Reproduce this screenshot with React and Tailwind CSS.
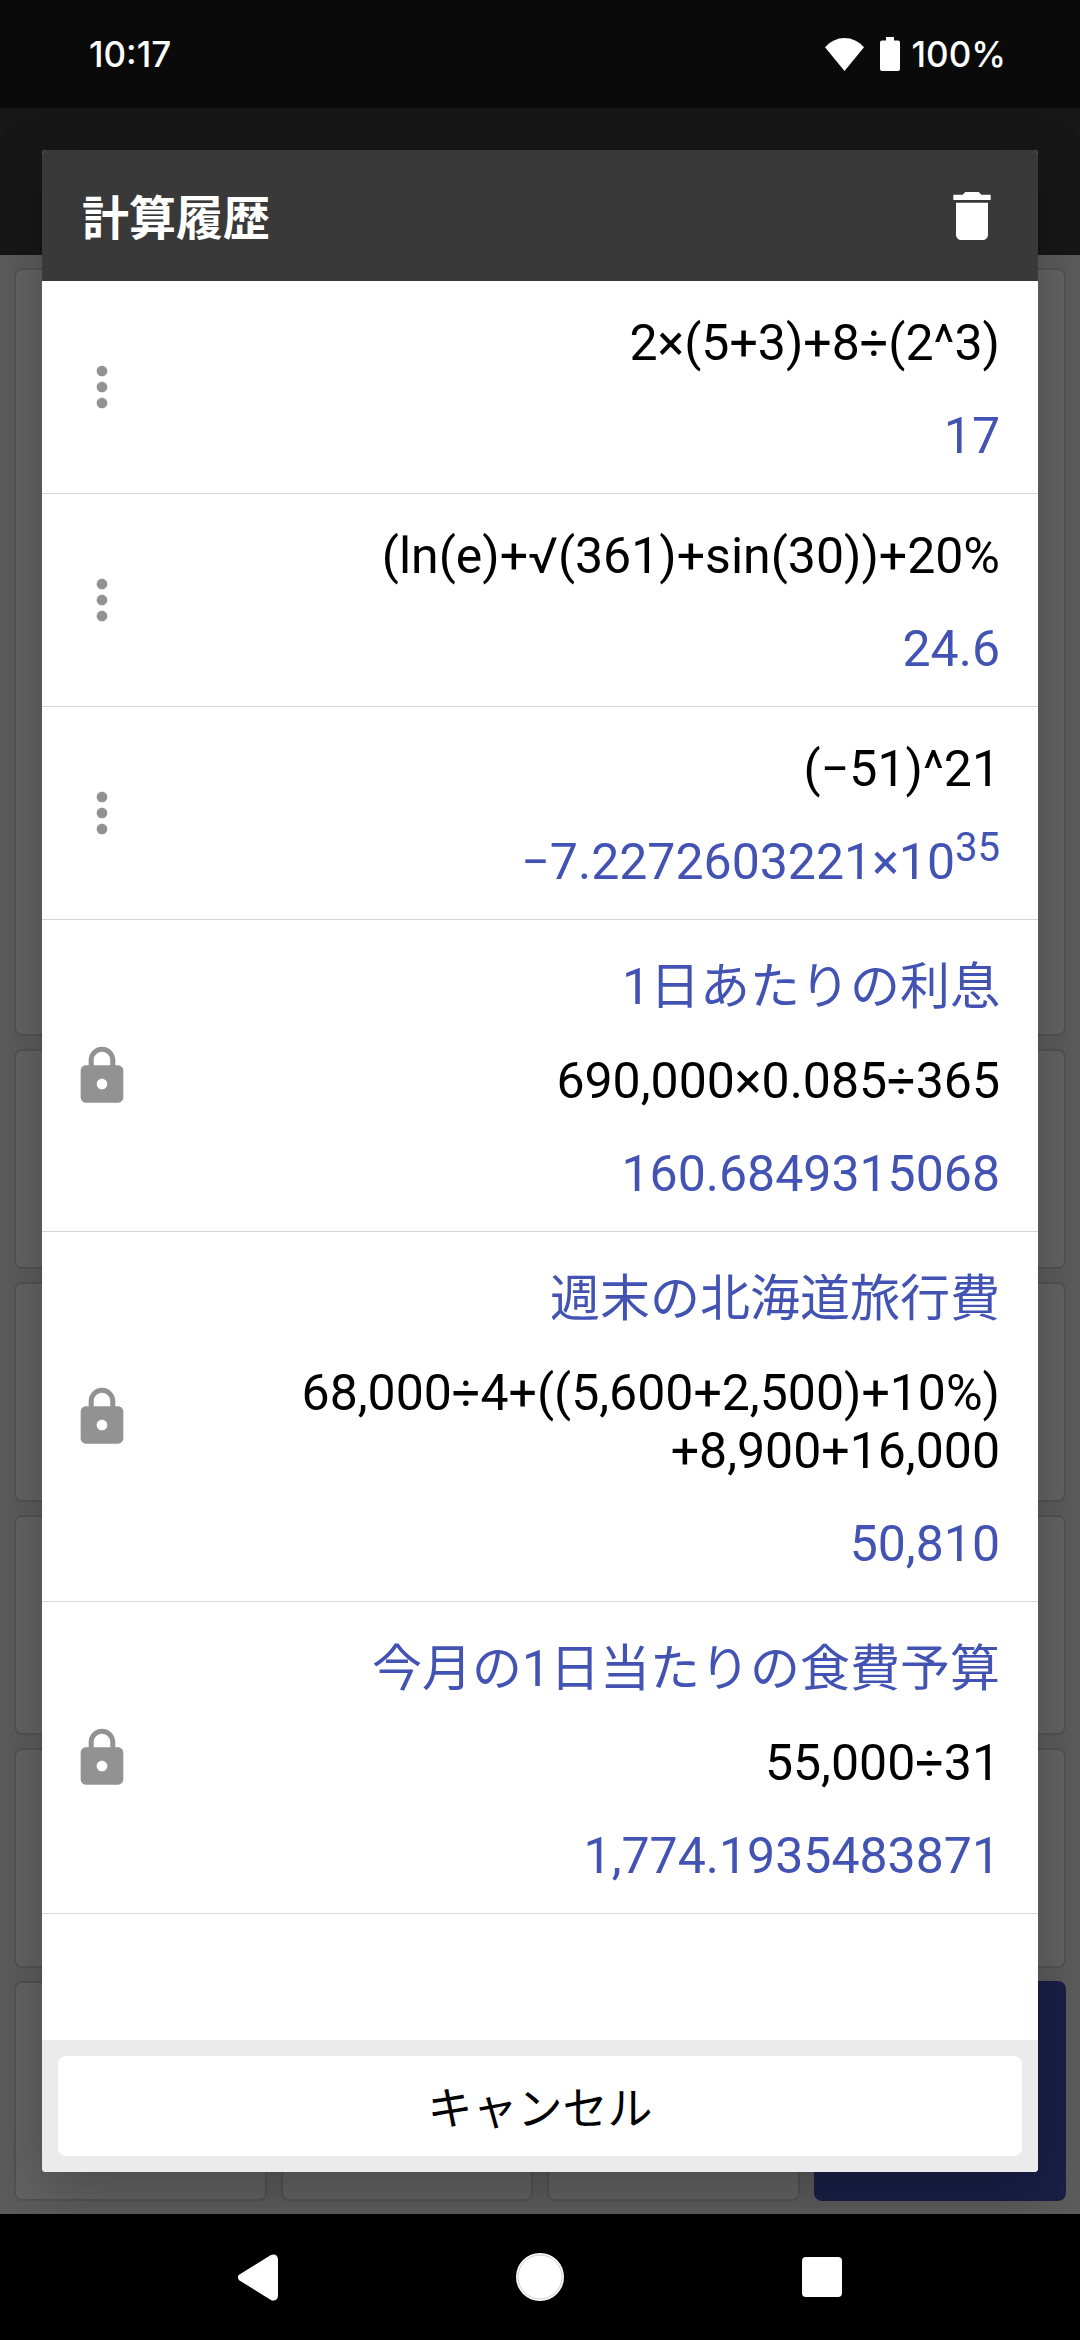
import React, { useState } from 'react';
import { MdDelete, MdLock, MdMoreVert } from 'react-icons/md';

const initialHistory = [
  { id: 1, expression: '2×(5+3)+8÷(2^3)', result: '17' },
  { id: 2, expression: '(ln(e)+√(361)+sin(30))+20%', result: '24.6' },
  { id: 3, expression: '(−51)^21', result: '−7.2272603221×10', exponent: '35' },
  { id: 4, label: '1日あたりの利息', expression: '690,000×0.085÷365', result: '160.6849315068', locked: true },
  {
    id: 5,
    label: '週末の北海道旅行費',
    expression: '68,000÷4+((5,600+2,500)+10%)\n+8,900+16,000',
    result: '50,810',
    locked: true,
  },
  { id: 6, label: '今月の1日当たりの食費予算', expression: '55,000÷31', result: '1,774.1935483871', locked: true },
];

const keys = Array.from({ length: 20 }, (_, i) => i);

const StatusBar = () => (
  <header className="flex h-[108px] items-center justify-between bg-[#0a0a0a] pr-[74px] pl-[89px] font-['Inter',sans-serif] text-[35px] font-medium text-white">
    <span>10:17</span>
    <div className="flex items-center">
      <svg className="mr-4 h-[33px] w-[39px]" viewBox="0 0 39 33" fill="currentColor" aria-hidden="true">
        <path d="M19.5 33 0 9.2C5.400 3.400 12 0 19.500 0S33.600 3.400 39 9.200Z" />
      </svg>
      <svg className="mr-3 h-[34px] w-[20px]" viewBox="0 0 20 34" fill="currentColor" aria-hidden="true">
        <path d="M6 0h8v3.400h4a2 2 0 0 1 2 2V32a2 2 0 0 1-2 2H2a2 2 0 0 1-2-2V5.400a2 2 0 0 1 2-2h4Z" />
      </svg>
      <span>100%</span>
    </div>
  </header>
);

// Calculator screen that sits behind the dialog
const Calculator = () => (
  <div className="col-start-1 row-start-1 flex flex-col bg-[#e6e6e6]" aria-hidden="true">
    <div className="h-[147px] bg-[#3a3a3a]" />
    <div className="flex flex-1 flex-col gap-[13px] px-[14px] py-[13px]">
      <div className="flex-1 rounded-lg border-2 border-[#d0d0d0] bg-[#f8f8f8]" />
      <div className="grid grid-cols-4 gap-x-[14px] gap-y-[13px]">
        {keys.map((key) => (
          <div
            key={key}
            className={`h-[220px] rounded-lg ${
              key === keys.length - 1 ? 'bg-[#434eb0]' : 'border-2 border-[#d0d0d0] bg-[#f8f8f8]'
            }`}
          />
        ))}
      </div>
    </div>
  </div>
);

const HistoryItem = ({ item }) => {
  const Icon = item.locked ? MdLock : MdMoreVert;

  return (
    <li className="flex items-center border-b border-[#d6d6d6] pr-[38px] pl-7">
      <button type="button" aria-label={item.locked ? 'ロック中' : 'メニュー'} className="text-[#929292]">
        <Icon className="size-16" />
      </button>
      <div className="flex flex-1 flex-col gap-[35px] pt-[33px] pb-7 text-right text-[50px] leading-[58px]">
        {item.label && <p className="pt-1 leading-[60px] text-[#4353b3]">{item.label}</p>}
        <p className="whitespace-pre-line text-black">{item.expression}</p>
        <p className="text-[#4353b3]">
          {item.result}
          {item.exponent && <sup className="-top-[18px] text-[40px]">{item.exponent}</sup>}
        </p>
      </div>
    </li>
  );
};

const NavigationBar = () => (
  <nav className="flex h-[126px] items-center justify-center gap-[218px] bg-black text-white">
    <button type="button" aria-label="戻る">
      <svg className="size-16" viewBox="0 0 64 64" fill="currentColor">
        <path d="M13.500 29.600 44.500 10.300C48 8.200 52 10 52 14.500V50.500C52 55 48 56.800 44.500 54.700L13.500 35.400C11.400 34 11.400 31 13.500 29.600Z" />
      </svg>
    </button>
    <button type="button" aria-label="ホーム">
      <svg className="size-16" viewBox="0 0 64 64">
        <circle cx="32" cy="32" r="24" fill="currentColor" />
        <circle cx="32" cy="32" r="22" fill="none" stroke="#9a9a9a" strokeWidth="0.500" />
      </svg>
    </button>
    <button type="button" aria-label="最近使ったアプリ">
      <svg className="size-16" viewBox="0 0 64 64" fill="currentColor">
        <rect x="12" y="12" width="40" height="40" rx="4" />
      </svg>
    </button>
  </nav>
);

const App = () => {
  const [history, setHistory] = useState(initialHistory);
  const [open, setOpen] = useState(true);

  // Locked entries survive a clear
  const clearHistory = () => setHistory(history.filter((item) => item.locked));

  return (
    <div lang="ja" className="flex min-h-screen flex-col font-['Roboto','Noto_Sans_CJK_JP',sans-serif]">
      <StatusBar />
      <main className="grid flex-1 overflow-hidden">
        <Calculator />
        {open && (
          <div className="z-10 col-start-1 row-start-1 flex bg-black/60 p-[42px]">
            <section
              role="dialog"
              aria-labelledby="history-title"
              className="flex flex-1 flex-col overflow-hidden rounded-sm bg-white shadow-[0_20px_60px_rgba(0,0,0,0.25)]"
            >
              <div className="flex h-[131px] items-center justify-between bg-[#393939] pr-[34px] pl-[40px] text-white">
                <h1 id="history-title" className="pt-2 text-[47px] font-bold">
                  計算履歴
                </h1>
                <button type="button" aria-label="履歴を削除" onClick={clearHistory}>
                  <MdDelete className="size-16" />
                </button>
              </div>
              <ul className="flex-1">
                {history.map((item) => (
                  <HistoryItem key={item.id} item={item} />
                ))}
              </ul>
              <div className="flex bg-[#ebebeb] p-4">
                <button
                  type="button"
                  onClick={() => setOpen(false)}
                  className="h-[100px] flex-1 rounded-lg bg-white pt-2 text-[45px] text-black"
                >
                  キャンセル
                </button>
              </div>
            </section>
          </div>
        )}
      </main>
      <NavigationBar />
    </div>
  );
};

export default App;
